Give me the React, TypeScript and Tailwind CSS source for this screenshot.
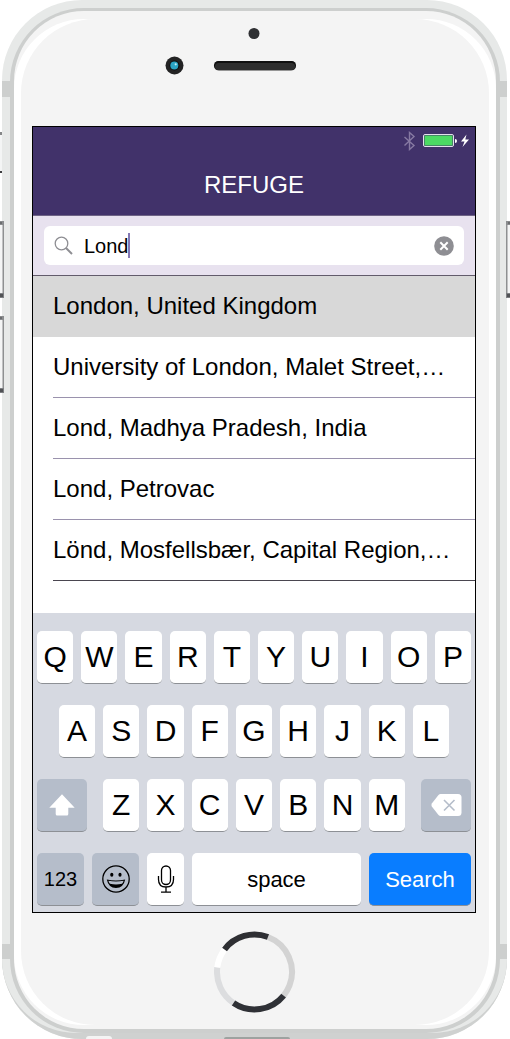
import React, { useState } from "react";

const places = [
  "London, United Kingdom",
  "University of London, Malet Street,…",
  "Lond, Madhya Pradesh, India",
  "Lond, Petrovac",
  "Lönd, Mosfellsbær, Capital Region,…",
];

const keyBase =
  "flex h-[53px] items-center justify-center rounded-[5px] border-b border-[#8d9095] text-black";

function LetterKey({ letter }: { letter: string }) {
  return (
    <button type="button" className={`${keyBase} min-w-0 flex-1 bg-white text-[30px] leading-none`}>
      {letter}
    </button>
  );
}

function Sensors() {
  return (
    <svg viewBox="0 0 182 54" className="mt-3 h-[54px] w-[182px] self-center" aria-hidden="true">
      <circle cx="90" cy="10.500" r="5.500" fill="#2f3033" />
      <circle cx="10.500" cy="42.500" r="9" fill="#232324" />
      <circle cx="10.500" cy="42.500" r="5" fill="#0d0d0e" />
      <circle cx="10.300" cy="42.500" r="4" fill="#2ba3c4" />
      <circle cx="11.700" cy="41.300" r="1.100" fill="#bdeaf5" />
      <rect x="50" y="38" width="82" height="9.800" rx="4.900" fill="#777" />
      <rect x="50" y="38" width="82" height="9" rx="4.500" fill="#101010" />
      <rect x="51" y="40" width="80" height="7" rx="3.500" fill="#2d2d2d" />
    </svg>
  );
}

function HomeRing() {
  const arcs = [
    { start: 21, size: 108, color: "#d3d3d3" },
    { start: 214, size: 63, color: "#dcdddf" },
    { start: 277, size: 30, color: "#ffffff" },
    { start: 307, size: 74, color: "#2e2f33" },
    { start: 129, size: 85, color: "#2f3136" },
  ];
  return (
    <svg viewBox="0 0 82 82" className="h-[82px] w-[82px]" fill="none" aria-hidden="true">
      {arcs.map((a) => (
        <circle
          key={a.start}
          cx="40.500"
          cy="41"
          r="37.500"
          stroke={a.color}
          strokeWidth="6"
          pathLength={360}
          strokeDasharray={`${a.size} ${360 - a.size}`}
          transform={`rotate(${a.start - 90} 40.5 41)`}
        />
      ))}
    </svg>
  );
}

function VolumeButton({ className }: { className: string }) {
  return (
    <svg viewBox="0 0 4 77" className={className} aria-hidden="true">
      <rect width="4" height="77" fill="#f4f5f5" />
      <rect x="2.500" width="1.500" height="77" fill="#8e9091" />
      <rect width="4" height="4" fill="#8b8d8f" />
      <rect x="0" y="1" width="2" height="2" fill="#6b6d6f" />
      <rect y="72" width="4" height="5" fill="#7d7f82" />
      <rect y="73" width="3" height="3" fill="#505255" />
    </svg>
  );
}

function StatusIcons() {
  return (
    <svg viewBox="0 0 68 20" className="h-5 w-[68px]" fill="none" aria-hidden="true">
      <path
        d="M1.500 6 L11 14.500 L6.500 18.500 V1.500 L11 5.500 L1.500 14.500"
        stroke="#8679a2"
        strokeWidth="1.400"
      />
      <rect x="20.500" y="3.500" width="30" height="12" rx="1.500" stroke="#e4e0ec" />
      <rect x="21.500" y="4.500" width="28" height="10" rx="0.500" fill="#4cd964" />
      <path d="M52 8 Q54 8.200 54 10 Q54 11.800 52 12 Z" fill="#fff" />
      <path d="M63.500 3.500 L58 10.500 H61.500 L59.500 16 L66 8.500 H62.300 Z" fill="#fff" />
    </svg>
  );
}

export default function App() {
  const [query, setQuery] = useState("Lond");

  return (
    <main className="relative bg-white font-['Liberation_Sans',Arial,sans-serif] text-black">
      <svg viewBox="0 0 4 41" className="absolute top-[132px] left-0 h-[41px] w-1" aria-hidden="true">
        <rect width="3" height="41" fill="#f4f5f5" />
        <rect width="3" height="3" fill="#858788" />
        <rect y="39" width="3" height="2" fill="#3c3d3f" />
      </svg>

      <div className="relative mr-[3px] ml-0.5 rounded-[80px] bg-[#e7e9e8] pt-2 pr-[7px] pb-1.5 pl-2">
        <div className="absolute inset-x-0 bottom-0 h-20 rounded-b-[80px] bg-[#cfd1d0]" />
        <div className="absolute inset-x-0 bottom-1.5 h-[74px] rounded-b-[76px] bg-[#e7e9e8]" />
        <div className="absolute inset-x-0 top-[81px] h-4 bg-[#cdcfce]" />
        <div className="absolute inset-x-0 bottom-20 h-[15px] bg-[#cdcfce]" />
        <div className="absolute bottom-0 left-[84px] h-[3px] w-[26px] rounded-t-full bg-[#f4f4f4]" />
        <div className="absolute bottom-0 left-[222px] h-0.5 w-[66px] rounded-t-full bg-[#9da2a0]" />

        <div className="relative rounded-[74px] bg-[#cdcfce] px-1 pt-[3px] pb-1">
          <div className="relative flex flex-col overflow-hidden rounded-[70px] bg-[#f4f4f4]">
            <div className="absolute inset-x-0 top-2 bottom-1 rounded-[70px] bg-white" />
            <div className="absolute inset-x-[7px] top-2 bottom-1 rounded-[74px] bg-[#f4f4f4]" />

            <div className="relative flex h-[115px] flex-col">
              <Sensors />
            </div>

            <section className="relative mr-5 ml-[18px] border border-black bg-white">
              <header className="flex h-[89px] flex-col border-b border-[#6e6385] bg-[#41326a]">
                <div className="flex justify-end pt-1 pr-1">
                  <StatusIcons />
                </div>
                <h1 className="mt-5 text-center text-[24px] leading-[28px] text-white">REFUGE</h1>
              </header>

              <div className="border-b border-[#625b6b] bg-[#e8e2ef] px-[11px] py-[10px]">
                <div className="flex h-[39px] items-center rounded-md bg-white pr-[10px] pl-[10px]">
                  <label htmlFor="place-search" className="mr-[11px]" aria-label="Search places">
                    <svg viewBox="0 0 19 19" className="h-[19px] w-[19px]" fill="none" stroke="#8e8e93">
                      <circle cx="7.500" cy="7.500" r="6.300" strokeWidth="1.300" />
                      <path d="M12 12 L18 18" strokeWidth="2" />
                    </svg>
                  </label>
                  <input
                    id="place-search"
                    type="text"
                    value={query}
                    onChange={(e) => setQuery(e.target.value)}
                    className="field-sizing-content min-w-0 bg-transparent text-[20px] leading-6 caret-transparent outline-none"
                  />
                  <span className="-ml-px h-[25px] w-0.5 shrink-0 bg-[#8478b4]" />
                  <button
                    type="button"
                    aria-label="Clear search"
                    onClick={() => setQuery("")}
                    className="ml-auto"
                  >
                    <svg viewBox="0 0 20 20" className="h-5 w-5">
                      <circle cx="10" cy="10" r="9.800" fill="#8e8e93" />
                      <path d="M6.300 6.300 L13.700 13.700 M13.700 6.300 L6.300 13.700" stroke="#fff" strokeWidth="2" />
                    </svg>
                  </button>
                </div>
              </div>

              <ul className="pb-8 text-[24px] leading-[28px]">
                {places.map((place, i) => (
                  <li key={place} className={i === 0 ? "bg-[#d8d8d8] pl-5" : "pl-5"}>
                    <button
                      type="button"
                      className={`flex h-[61px] w-full items-center border-b text-left whitespace-nowrap ${
                        i === 0
                          ? "border-[#d8d8d8]"
                          : i === places.length - 1
                            ? "border-[#4a4650]"
                            : "border-[#9a92ad]"
                      }`}
                    >
                      {place}
                    </button>
                  </li>
                ))}
              </ul>

              <div className="flex flex-col gap-[21px] bg-[#d6d9e1] px-1 pt-[18px] pb-[6px]">
                <div className="flex gap-2">
                  {"QWERTYUIOP".split("").map((l) => (
                    <LetterKey key={l} letter={l} />
                  ))}
                </div>
                <div className="flex gap-2 px-[22px]">
                  {"ASDFGHJKL".split("").map((l) => (
                    <LetterKey key={l} letter={l} />
                  ))}
                </div>
                <div className="flex gap-4">
                  <button type="button" aria-label="Shift" className={`${keyBase} w-[50px] bg-[#b5bdca]`}>
                    <svg viewBox="0 0 26 22" className="h-[22px] w-[26px]" fill="#fff">
                      <path d="M13 0.300 L25.700 13.700 H19.300 V20 Q19.300 21.500 17.800 21.500 H8.200 Q6.700 21.500 6.700 20 V13.700 H0.300 Z" />
                    </svg>
                  </button>
                  <div className="flex flex-1 gap-2">
                    {"ZXCVBNM".split("").map((l) => (
                      <LetterKey key={l} letter={l} />
                    ))}
                  </div>
                  <button type="button" aria-label="Delete" className={`${keyBase} w-[50px] bg-[#b5bdca]`}>
                    <svg viewBox="0 0 31 22" className="h-[22px] w-[31px]">
                      <path
                        d="M9.500 0 H27 Q30.500 0 30.500 3.500 V18.500 Q30.500 22 27 22 H9.500 Q8.500 22 7.500 21 L0.800 12.500 Q0 11 0.800 9.500 L7.500 1 Q8.500 0 9.500 0 Z"
                        fill="#fff"
                      />
                      <path d="M13 6 L23.500 16.500 M23.500 6 L13 16.500" stroke="#b5bdca" strokeWidth="1.600" />
                    </svg>
                  </button>
                </div>
                <div className="flex gap-2">
                  <button type="button" className={`${keyBase} w-[47px] bg-[#b5bdca] text-[20px]`}>
                    123
                  </button>
                  <button type="button" aria-label="Emoji" className={`${keyBase} w-[47px] bg-[#b5bdca]`}>
                    <svg viewBox="0 0 28 28" className="h-7 w-7" fill="none">
                      <circle cx="14" cy="14" r="13.200" stroke="#000" strokeWidth="1.300" />
                      <ellipse cx="9.800" cy="9.700" rx="1.600" ry="2" fill="#000" />
                      <ellipse cx="18" cy="9.700" rx="1.600" ry="2" fill="#000" />
                      <path d="M4.800 14.500 Q14 16.500 23.200 14.500 Q21.500 23 14 23 Q6.500 23 4.800 14.500 Z" fill="#000" />
                      <path d="M6.400 15.800 Q14 17.400 21.600 15.800 Q21.200 17.600 20 18.800 Q14 20 8 18.800 Q6.800 17.600 6.400 15.800 Z" fill="#b5bdca" />
                    </svg>
                  </button>
                  <button type="button" aria-label="Dictation" className={`${keyBase} w-[37px] bg-white`}>
                    <svg viewBox="0 0 18 28" className="h-7 w-[18px]" fill="none" stroke="#000" strokeWidth="1.300">
                      <rect x="4.500" y="1" width="9" height="18.500" rx="4.500" />
                      <path d="M1.500 11 V14.500 Q1.500 22 9 22 Q16.500 22 16.500 14.500 V11 M9 22 V27 M4 27.200 H14" />
                    </svg>
                  </button>
                  <button type="button" className={`${keyBase} flex-1 bg-white text-[22px]`}>
                    space
                  </button>
                  <button type="button" className={`${keyBase} w-[102px] bg-[#097dff] text-[22px]`}>
                    <span className="text-white">Search</span>
                  </button>
                </div>
              </div>
            </section>

            <div className="relative flex justify-center pt-[18px] pb-4">
              <button type="button" aria-label="Home" className="rounded-full">
                <HomeRing />
              </button>
            </div>
          </div>
        </div>
      </div>

      <VolumeButton className="absolute top-[221px] left-0 h-[77px] w-1" />
      <VolumeButton className="absolute top-[316px] left-0 h-[77px] w-1" />
      <VolumeButton className="absolute top-[221px] right-0 h-[77px] w-1 -scale-x-100" />
    </main>
  );
}
